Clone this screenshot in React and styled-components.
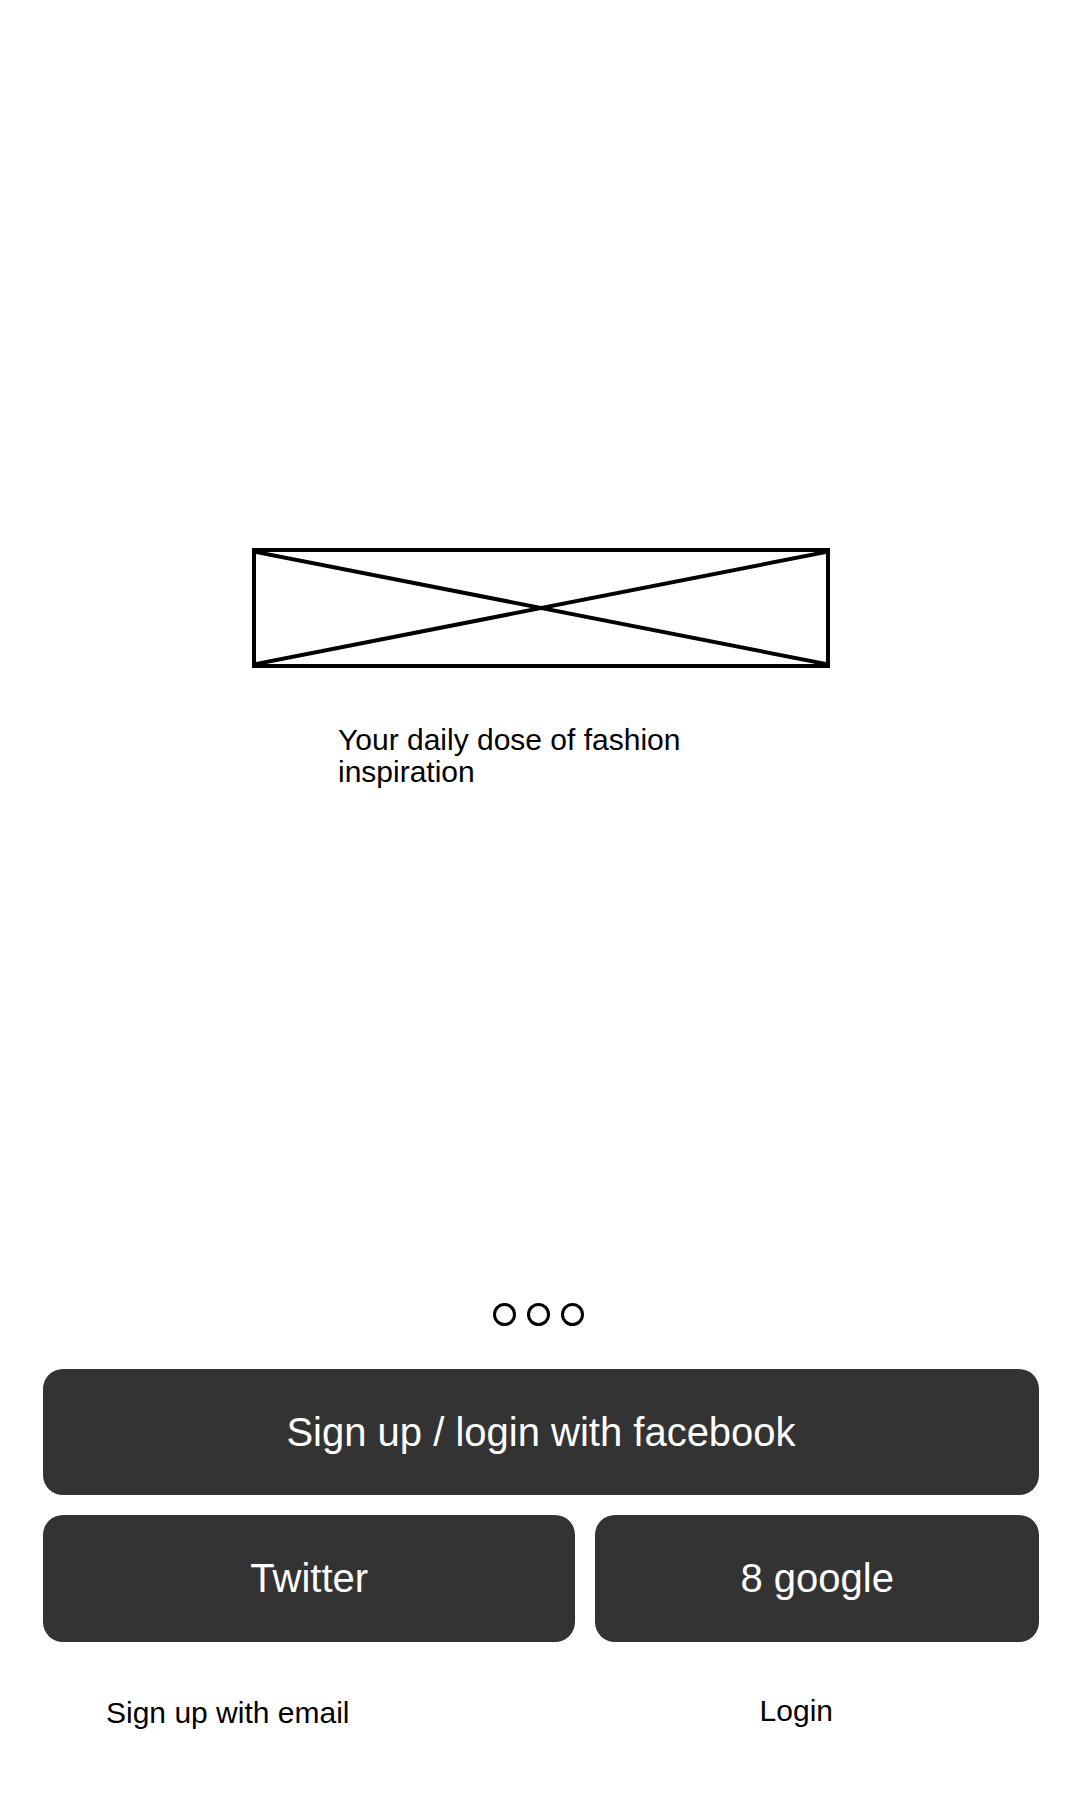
import React from "react";
import styled, { createGlobalStyle } from "styled-components";

const GlobalStyle = createGlobalStyle`
  html, body {
    margin: 0;
    padding: 0;
    background: #ffffff;
  }
  body {
    font-family: "Liberation Sans", Arial, sans-serif;
    color: #000000;
  }
  * { box-sizing: border-box; }
`;

const Page = styled.div`
  width: 1080px;
  min-height: 1800px;
  padding: 548px 41px 0 43px;
  display: flex;
  flex-direction: column;
`;

const Placeholder = styled.div`
  width: 578px;
  height: 120px;
  margin: 0 auto;
  border: 4px solid #000;
  display: flex;
`;

const Cross = styled.svg`
  width: 100%;
  height: 100%;
  display: block;
`;

const Tagline = styled.p`
  width: 406px;
  margin: 56px auto 0;
  font-size: 30px;
  line-height: 32px;
  text-align: left;
`;

const Dots = styled.div`
  margin-top: 515px;
  display: flex;
  justify-content: center;
  gap: 11px;
  padding-right: 6px;
`;

const Dot = styled.span`
  width: 23px;
  height: 23px;
  border: 3px solid #000;
  border-radius: 50%;
  background: ${(p) => (p.$active ? "#000" : "transparent")};
`;

const Buttons = styled.div`
  margin-top: 43px;
  display: flex;
  flex-direction: column;
  gap: 20px;
`;

const Row = styled.div`
  display: flex;
  gap: 20px;
`;

const Button = styled.button`
  flex: ${(p) => (p.$grow ? `${p.$grow} 1 0` : "none")};
  height: ${(p) => p.$h || 126}px;
  border: none;
  border-radius: 20px;
  background: #333333;
  color: #ffffff;
  font-family: "Liberation Sans", Arial, sans-serif;
  font-size: 40px;
  display: flex;
  align-items: center;
  justify-content: center;
  padding: 0;
  cursor: pointer;
`;

const Links = styled.div`
  margin-top: 53px;
  display: flex;
  justify-content: space-between;
  align-items: flex-start;
  padding: 0 206px 0 63px;
`;

const TextLink = styled.a`
  font-size: 30px;
  line-height: 35px;
  color: #000;
  text-decoration: none;
  margin-top: ${(p) => p.$offset || 0}px;
  cursor: pointer;
`;

export default function App() {
  return (
    <>
      <GlobalStyle />
      <Page>
        <Placeholder>
          <Cross viewBox="0 0 100 100" preserveAspectRatio="none">
            <line x1="0" y1="0" x2="100" y2="100" stroke="#000" strokeWidth="4" vectorEffect="non-scaling-stroke" />
            <line x1="100" y1="0" x2="0" y2="100" stroke="#000" strokeWidth="4" vectorEffect="non-scaling-stroke" />
          </Cross>
        </Placeholder>
        <Tagline>Your daily dose of fashion inspiration</Tagline>
        <Dots>
          <Dot />
          <Dot />
          <Dot />
        </Dots>
        <Buttons>
          <Button>Sign up / login with facebook</Button>
          <Row>
            <Button $grow={6} $h={127}>Twitter</Button>
            <Button $grow={5} $h={127}>8 google</Button>
          </Row>
        </Buttons>
        <Links>
          <TextLink>Sign up with email</TextLink>
          <TextLink $offset={-2}>Login</TextLink>
        </Links>
      </Page>
    </>
  );
}
